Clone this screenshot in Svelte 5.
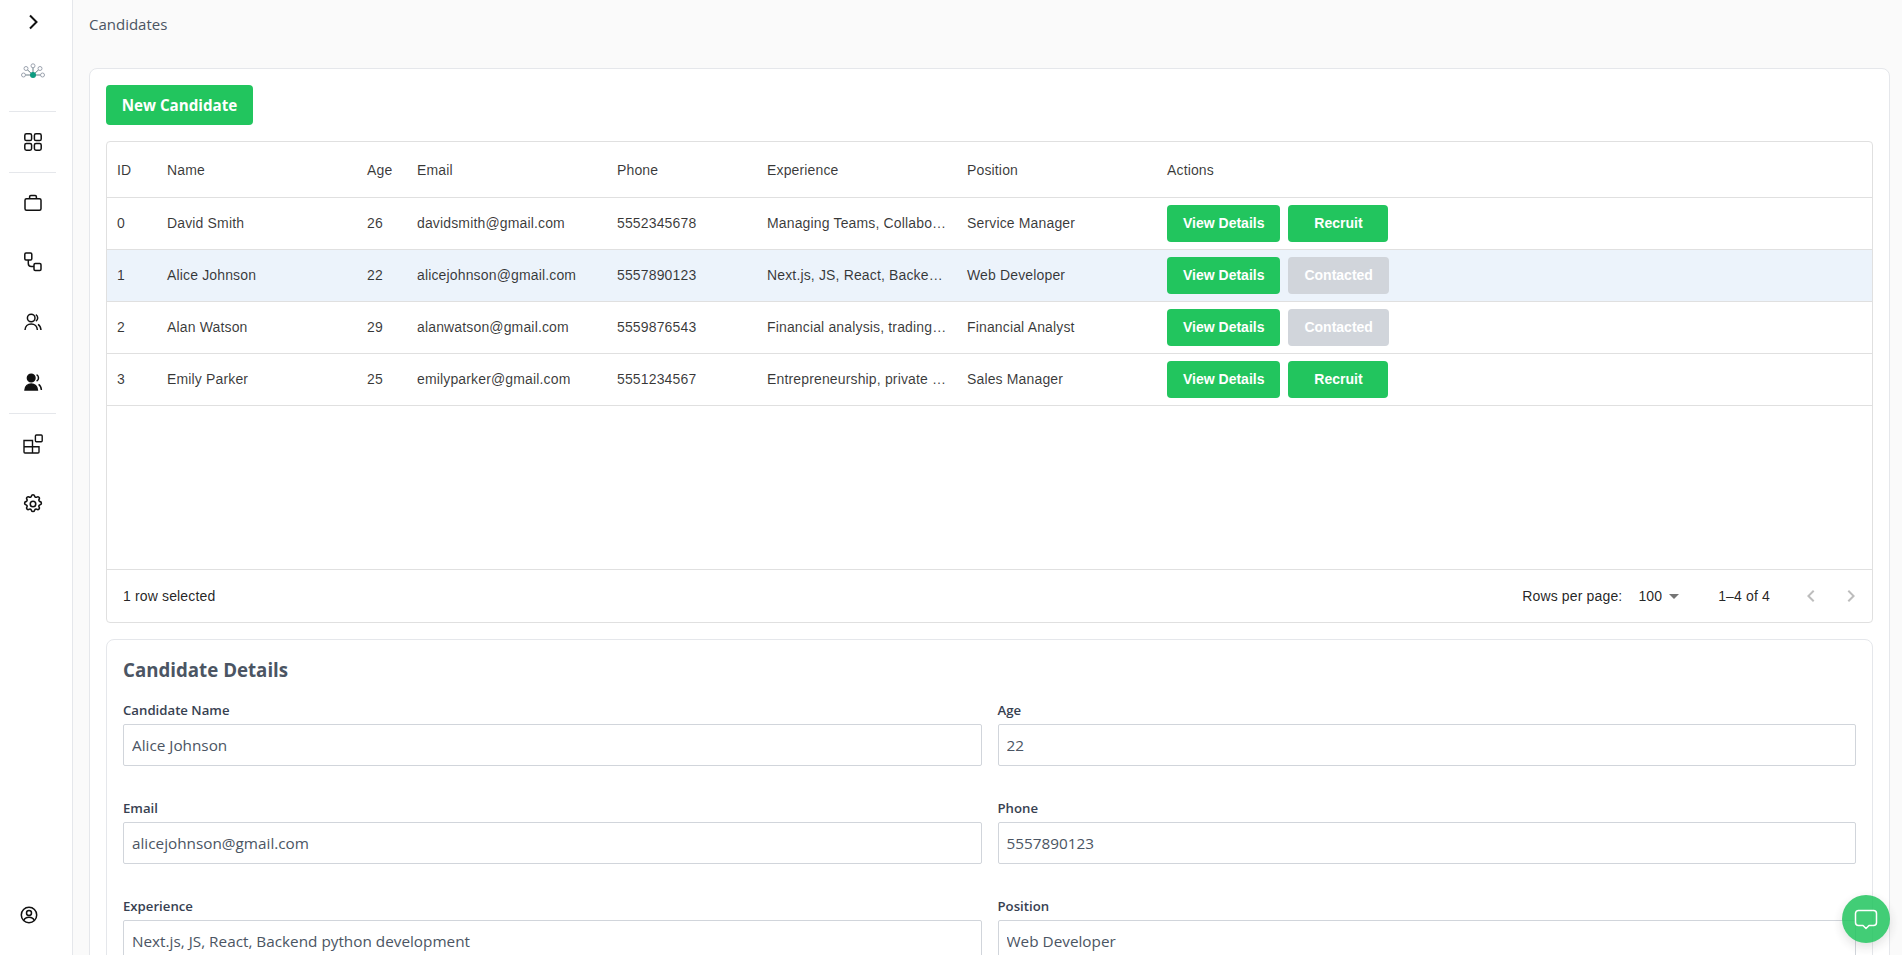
<script lang="ts">
	const rows = [
		{ id: 0, name: 'David Smith', age: 26, email: 'davidsmith@gmail.com', phone: '5552345678', exp: 'Managing Teams, Collaboration', pos: 'Service Manager', contacted: false },
		{ id: 1, name: 'Alice Johnson', age: 22, email: 'alicejohnson@gmail.com', phone: '5557890123', exp: 'Next.js, JS, React, Backend python development', pos: 'Web Developer', contacted: true },
		{ id: 2, name: 'Alan Watson', age: 29, email: 'alanwatson@gmail.com', phone: '5559876543', exp: 'Financial analysis, trading strategies', pos: 'Financial Analyst', contacted: true },
		{ id: 3, name: 'Emily Parker', age: 25, email: 'emilyparker@gmail.com', phone: '5551234567', exp: 'Entrepreneurship, private equity', pos: 'Sales Manager', contacted: false }
	];
	const columns = ['ID', 'Name', 'Age', 'Email', 'Phone', 'Experience', 'Position', 'Actions'];
	let selected = $state(1);
	const current = $derived(rows[selected]);
	const fields = $derived([
		['Candidate Name', current.name],
		['Age', String(current.age)],
		['Email', current.email],
		['Phone', current.phone],
		['Experience', current.exp],
		['Position', current.pos]
	]);
</script>

<div class="layout">
	<aside class="sidebar">
		<button class="toggle" type="button" aria-label="Expand">
			<svg width="24" height="24" viewBox="0 0 24 24" fill="none" stroke="#111" stroke-width="2"><path d="M9 5.500l6.500 6.500L9 18.500" /></svg>
		</button>
		<div class="logo">
			<svg width="26" height="20" viewBox="0 0 26 20" fill="none" stroke="#9ca3af" stroke-width="1">
				<path d="M13 13L4 13M13 13L6 6.500M13 13V4M13 13L20 6.500M13 13H22.500" stroke="#6b7f86" />
				<circle cx="3.500" cy="13" r="2" fill="#fff" />
				<circle cx="6" cy="6.500" r="2" fill="#fff" />
				<circle cx="13" cy="3.800" r="2" fill="#fff" />
				<circle cx="20" cy="6.500" r="2" fill="#fff" />
				<circle cx="22.500" cy="13" r="2" fill="#fff" />
				<circle cx="13" cy="13" r="3" fill="#0d9b80" stroke="none" />
			</svg>
		</div>
		<hr />
		<div class="nav-icon first">
			<svg width="20" height="20" viewBox="0 0 20 20" fill="none" stroke="#111" stroke-width="1.500">
				<rect x="1.800" y="1.800" width="6.800" height="6.800" rx="1.600" />
				<rect x="11.400" y="1.800" width="6.800" height="6.800" rx="1.600" />
				<rect x="1.800" y="11.400" width="6.800" height="6.800" rx="1.600" />
				<rect x="11.400" y="11.400" width="6.800" height="6.800" rx="1.600" />
			</svg>
		</div>
		<hr class="second" />
		<div class="nav-icon brief">
			<svg width="20" height="20" viewBox="0 0 20 20" fill="none" stroke="#111" stroke-width="1.500">
				<rect x="2" y="5.800" width="16" height="11.400" rx="1.500" />
				<path d="M6.600 5.800V3.800a1.200 1.200 0 0 1 1.200-1.200h4.400a1.200 1.200 0 0 1 1.200 1.200v2" />
			</svg>
		</div>
		<div class="nav-icon">
			<svg width="20" height="20" viewBox="0 0 20 20" fill="none" stroke="#111" stroke-width="1.500">
				<rect x="1.800" y="1" width="7" height="7" rx="1.200" />
				<rect x="11" y="11.500" width="7" height="7" rx="1.200" />
				<path d="M5.300 8v3.500a3 3 0 0 0 3 3H11" />
			</svg>
		</div>
		<div class="nav-icon users">
			<svg width="20" height="20" viewBox="0 0 20 20" fill="none" stroke="#111" stroke-width="1.500">
				<circle cx="8.200" cy="6" r="3.800" />
				<path d="M2 18c.2-3.600 2.800-6 6.200-6s6 2.400 6.200 6" />
				<path d="M12.800 2.600a3.800 3.800 0 0 1 0 6.600M15 12.400c1.800 1.100 2.800 3 3 5.600" />
			</svg>
		</div>
		<div class="nav-icon users">
			<svg width="20" height="20" viewBox="0 0 20 20" fill="#111" stroke="#111" stroke-width="1.500">
				<circle cx="8.200" cy="6" r="3.800" />
				<path d="M2 18c.2-3.600 2.800-6 6.200-6s6 2.400 6.200 6z" />
				<path fill="none" d="M13.600 2.600a3.800 3.800 0 0 1 0 6.600M15.600 12.400c1.800 1.100 2.600 3 2.800 5.600" />
			</svg>
		</div>
		<hr class="third" />
		<div class="nav-icon apps">
			<svg width="20" height="20" viewBox="0 0 20 20" fill="none" stroke="#111" stroke-width="1.400">
				<path d="M1 6.500h8.500V19H2a1 1 0 0 1-1-1zM1 12.700h15V18a1 1 0 0 1-1 1H9.500" />
				<rect x="12.400" y="1" width="6.800" height="6.800" rx="1" />
			</svg>
		</div>
		<div class="nav-icon gear">
			<svg width="22" height="22" viewBox="0 0 24 24" fill="none" stroke="#111" stroke-width="1.700" stroke-linejoin="round">
				<path d="M10.300 3.300c.4-1.800 3-1.800 3.400 0a1.700 1.700 0 0 0 2.600 1.100c1.600-1 3.400.8 2.400 2.400a1.700 1.700 0 0 0 1.100 2.600c1.800.4 1.800 3 0 3.400a1.700 1.700 0 0 0-1.100 2.600c1 1.600-.8 3.400-2.400 2.400a1.700 1.700 0 0 0-2.600 1.100c-.4 1.800-3 1.800-3.400 0a1.700 1.700 0 0 0-2.600-1.100c-1.600 1-3.400-.8-2.400-2.400a1.700 1.700 0 0 0-1.100-2.600c-1.800-.4-1.800-3 0-3.400a1.700 1.700 0 0 0 1.100-2.600c-1-1.600.8-3.400 2.400-2.400a1.700 1.700 0 0 0 2.600-1.100z" />
				<circle cx="12" cy="12" r="3" />
			</svg>
		</div>
		<div class="profile">
			<svg width="18" height="18" viewBox="0 0 18 18" fill="none" stroke="#111" stroke-width="1.500">
				<circle cx="9" cy="9" r="7.700" />
				<circle cx="9" cy="7" r="2.500" />
				<path d="M3.800 14.500c.8-2.200 2.800-3.200 5.200-3.200s4.400 1 5.200 3.200" />
			</svg>
		</div>
	</aside>

	<main class="content">
		<div class="page-title">Candidates</div>
		<section class="outer-card">
			<button class="new-btn" type="button">New Candidate</button>

			<div class="grid">
				<div class="row head">
					{#each columns as c}
						<div class="cell">{c}</div>
					{/each}
				</div>
				{#each rows as r, i}
					<!-- svelte-ignore a11y_click_events_have_key_events, a11y_no_static_element_interactions -->
					<div class="row body" class:selected={i === selected} onclick={() => (selected = i)}>
						<div class="cell">{r.id}</div>
						<div class="cell">{r.name}</div>
						<div class="cell">{r.age}</div>
						<div class="cell">{r.email}</div>
						<div class="cell">{r.phone}</div>
						<div class="cell">{r.exp}</div>
						<div class="cell">{r.pos}</div>
						<div class="cell actions">
							<button class="act" type="button">View Details</button>
							{#if r.contacted}
								<button class="act off" type="button" disabled>Contacted</button>
							{:else}
								<button class="act" type="button">Recruit</button>
							{/if}
						</div>
					</div>
				{/each}
				<div class="filler"></div>
				<div class="grid-footer">
					<span class="selected-count">1 row selected</span>
					<div class="pager">
						<span class="rows-label">Rows per page:</span>
						<span class="rows-value">100</span>
						<svg class="caret" width="24" height="24" viewBox="0 0 24 24" fill="#757575"><path d="M7 10l5 5 5-5z" /></svg>
						<span class="range">1–4 of 4</span>
						<svg class="arrow" width="24" height="24" viewBox="0 0 24 24" fill="#bdbdbd"><path d="M15.410 7.410 14 6l-6 6 6 6 1.410-1.410L10.830 12z" /></svg>
						<svg class="arrow next" width="24" height="24" viewBox="0 0 24 24" fill="#bdbdbd"><path d="M10 6 8.590 7.410 13.170 12l-4.580 4.590L10 18l6-6z" /></svg>
					</div>
				</div>
			</div>

			<section class="details">
				<h2>Candidate Details</h2>
				<div class="form">
					{#each fields as [label, value]}
						<label class="field">
							<span>{label}</span>
							<input type="text" {value} readonly />
						</label>
					{/each}
				</div>
			</section>
		</section>
	</main>

	<button class="chat" type="button" aria-label="Chat">
		<svg width="24" height="24" viewBox="0 0 24 24" fill="none" stroke="#fff" stroke-width="1.500" stroke-linejoin="round">
			<path d="M4.500 3.500h15a3 3 0 0 1 3 3v9a3 3 0 0 1-3 3h-4.500L12 21.500 9 18.500H4.500a3 3 0 0 1-3-3v-9a3 3 0 0 1 3-3z" />
		</svg>
	</button>
</div>

<style>
	:global(body) {
		margin: 0;
		overflow: hidden;
		font-family: 'Open Sans', 'Noto Sans', sans-serif;
	}
	.layout { display: flex; height: 955px; overflow: hidden; background: #fafafa; }
	button { font-family: inherit; cursor: pointer; border: 0; }

	.sidebar {
		width: 65px;
		padding-right: 7px;
		flex: none;
		box-sizing: content-box;
		background: #fff;
		border-right: 1px solid #e5e7eb;
		display: flex;
		flex-direction: column;
		align-items: center;
	}
	.sidebar hr { width: 47px; height: 1px; margin: 0; border: 0; background: #e5e7eb; flex: none; }
	.toggle { margin-top: 10px; padding: 0; background: none; height: 24px; width: 24px; }
	.logo { margin-top: 28px; height: 20px; margin-bottom: 29px; }
	.nav-icon { height: 20px; margin-top: 39px; display: flex; justify-content: center; }
	.nav-icon.first { margin-top: 20px; }
	.sidebar hr.second { margin-top: 20px; }
	.nav-icon.brief { margin-top: 20px; }
	.nav-icon.users { margin-top: 40px; }
	.sidebar hr.third { margin-top: 21px; }
	.nav-icon.apps { margin-top: 20px; }
	.nav-icon.gear { margin-top: 39px; height: 22px; }
	.profile { margin-top: auto; margin-bottom: 31px; margin-right: 7px; height: 18px; }

	.content { flex: 1; min-width: 0; padding: 0 12px 0 16px; overflow: hidden; }
	.page-title { height: 68px; padding-top: 12px; box-sizing: border-box; font-size: 15px; line-height: 24px; color: #4b5563; }

	.outer-card { background: #fff; border: 1px solid #e5e7eb; border-radius: 8px; padding: 16px; }
	.new-btn {
		display: block;
		height: 40px;
		width: 147px;
		background: #22c55e;
		color: #fff;
		font-weight: 700;
		font-size: 15.200px;
		border-radius: 4px;
		margin-bottom: 16px;
		padding: 0;
	}

	.grid {
		border: 1px solid #e0e0e0;
		border-radius: 4px;
		font-family: 'Liberation Sans', Arial, sans-serif;
		font-size: 14px;
		letter-spacing: 0.01071em;
		color: rgba(0, 0, 0, 0.78);
	}
	.row {
		display: grid;
		grid-template-columns: 50px 200px 50px 200px 150px 200px 200px 1fr;
		height: 52px;
		border-bottom: 1px solid #e0e0e0;
		box-sizing: border-box;
		align-items: center;
		cursor: pointer;
	}
	.row.head { height: 56px; cursor: default; }
	.row.selected { background: #ecf3fb; }
	.cell { padding: 0 10px; white-space: nowrap; overflow: hidden; text-overflow: ellipsis; }
	.row.body .cell { padding-bottom: 1px; }
	.row.body .cell.actions { padding-bottom: 0; }
	.actions { display: flex; gap: 8px; overflow: visible; }
	.act {
		height: 37px;
		min-width: 100px;
		padding: 0 16px 1px;
		background: #22c55e;
		color: #fff;
		font-family: inherit;
		font-size: 14px;
		font-weight: 700;
		letter-spacing: 0;
		border-radius: 4px;
	}
	.act.off { background: #d1d5db; cursor: default; }
	.filler { height: 164px; border-bottom: 1px solid #e0e0e0; box-sizing: border-box; }
	.grid-footer {
		height: 52px;
		display: flex;
		align-items: center;
		justify-content: space-between;
		padding: 0 9px 0 16px;
		color: rgba(0, 0, 0, 0.87);
	}
	.selected-count { margin-bottom: 1px; }
	.pager { display: flex; align-items: center; }
	.rows-label, .rows-value, .range { margin-bottom: 1px; }
	.rows-value { margin-left: 16px; }
	.range { margin-left: 32px; margin-right: 29px; }
	.arrow.next { margin-left: 16px; }

	.details { margin-top: 16px; border: 1px solid #e5e7eb; border-radius: 8px; padding: 16px; }
	.details h2 { margin: 0 0 16px; font-size: 18.700px; line-height: 28px; font-weight: 700; color: #4b5563; }
	.form { display: grid; grid-template-columns: 1fr 1fr; column-gap: 16px; row-gap: 32px; }
	.field { display: block; }
	.field span { display: block; font-size: 13.200px; line-height: 20px; font-weight: 600; color: #374151; margin-bottom: 4px; }
	.field input {
		display: block;
		width: 100%;
		box-sizing: border-box;
		height: 42px;
		padding: 0 8px;
		border: 1px solid #d1d5db;
		border-radius: 2px;
		font-family: inherit;
		font-size: 15.300px;
		color: #4b5563;
		background: #fff;
		outline: none;
	}

	.chat {
		position: fixed;
		right: 12px;
		bottom: 12px;
		width: 48px;
		height: 48px;
		border-radius: 50%;
		background: #22c55e;
		opacity: 0.85;
		display: flex;
		align-items: center;
		justify-content: center;
		padding: 0;
		box-shadow: 0 4px 12px rgba(0, 0, 0, 0.15);
	}
</style>
